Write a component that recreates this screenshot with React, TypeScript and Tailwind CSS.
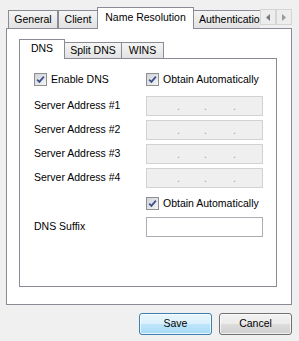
import React from 'react';

const border = 'border-[#898c95]';

function Check() {
  return (
    <span className="w-[13px] h-[13px] border border-[#8e8f8f] bg-[linear-gradient(135deg,#cfd3d9_0%,#f4f4f4_100%)] flex items-center justify-center shrink-0">
      <svg width="9" height="9" viewBox="0 0 9 9">
        <path d="M1.2 4.6 L3.4 6.9 L7.9 1.6" stroke="#3a4f8c" strokeWidth="1.7" fill="none" />
      </svg>
    </span>
  );
}

function IpField() {
  return (
    <div className="w-[117px] h-[20px] border border-[#d2d2d2] bg-[#efefef] flex items-end pb-[4px] text-[#a0a0a0] leading-none">
      <span className="w-[33px] text-right">.</span>
      <span className="w-[27px] text-right">.</span>
      <span className="w-[29px] text-right">.</span>
    </div>
  );
}

function Arrow({ dir }: { dir: 'l' | 'r' }) {
  return (
    <div className="w-[16px] h-[16px] border border-[#d5d5d5] bg-[#ededed] flex items-center justify-center">
      <svg width="4" height="7" viewBox="0 0 4 7">
        {dir === 'l' ? <path d="M4 0 L0 3.5 L4 7 Z" fill="#7a7a7a" /> : <path d="M0 0 L4 3.5 L0 7 Z" fill="#9a9a9a" />}
      </svg>
    </div>
  );
}

export default function App() {
  const rows = ['Server Address #1', 'Server Address #2', 'Server Address #3', 'Server Address #4'];

  return (
    <div className="w-[299px] h-[341px] bg-[#f0f0f0] pt-[7px] pl-[6px] text-[10.5px] text-black font-['Liberation_Sans',Arial,sans-serif] overflow-hidden">
      {/* outer tab strip */}
      <div className="relative z-10 w-[286px] h-[22px] -mb-px flex">
        <div className="flex-1 overflow-hidden flex items-end pl-[2px]">
          <div className={`w-[50px] h-[18px] mb-px shrink-0 border border-b-0 ${border} bg-linear-to-b from-[#f4f4f4] to-[#e2e2e2] flex items-center justify-center`}>General</div>
          <div className={`w-[40px] h-[18px] mb-px shrink-0 border border-b-0 ${border} bg-linear-to-b from-[#f4f4f4] to-[#e2e2e2] flex items-center justify-center`}>Client</div>
          <div className={`w-[97px] h-[22px] -ml-px shrink-0 border border-b-0 ${border} bg-white flex items-center justify-center pb-[2px]`}>Name Resolution</div>
          <div className={`w-[90px] h-[18px] mb-px -ml-px shrink-0 border border-b-0 ${border} bg-linear-to-b from-[#f4f4f4] to-[#e2e2e2] flex items-center pl-[5px] whitespace-nowrap`}>Authentication</div>
        </div>
        <div className="flex self-start mt-[2px]">
          <Arrow dir="l" />
          <Arrow dir="r" />
        </div>
      </div>

      {/* outer panel */}
      <div className={`w-[286px] h-[277px] border ${border} bg-white pt-[10px] pl-[12px]`}>
        {/* inner tab strip */}
        <div className="relative z-10 h-[20px] -mb-px flex items-end">
          <div className={`w-[46px] h-[20px] shrink-0 border border-b-0 ${border} bg-white flex items-center justify-center pb-[1px]`}>DNS</div>
          <div className={`w-[58px] h-[16px] mb-px -ml-px shrink-0 border border-b-0 ${border} bg-linear-to-b from-[#f4f4f4] to-[#e2e2e2] flex items-center justify-center`}>Split DNS</div>
          <div className={`w-[43px] h-[16px] mb-px -ml-px shrink-0 border border-b-0 ${border} bg-linear-to-b from-[#f4f4f4] to-[#e2e2e2] flex items-center justify-center`}>WINS</div>
        </div>

        {/* inner panel */}
        <div className={`w-[258px] h-[229px] border ${border} bg-white pt-[14px] pl-[14px] flex flex-col`}>
          <div className="flex items-center h-[13px]">
            <div className="w-[112px] flex items-center gap-[4px]">
              <Check />
              <span>Enable DNS</span>
            </div>
            <div className="flex items-center gap-[4px]">
              <Check />
              <span>Obtain Automatically</span>
            </div>
          </div>

          <div className="mt-[10px] flex flex-col gap-[4px]">
            {rows.map(r => (
              <div key={r} className="flex items-center h-[20px]">
                <span className="w-[112px]">{r}</span>
                <IpField />
              </div>
            ))}
          </div>

          <div className="mt-[9px] flex items-center h-[13px] pl-[112px] gap-[4px]">
            <Check />
            <span>Obtain Automatically</span>
          </div>

          <div className="mt-[7px] flex items-center h-[20px]">
            <span className="w-[112px]">DNS Suffix</span>
            <div className="w-[117px] h-[20px] border border-[#abadb3] bg-white" />
          </div>
        </div>
      </div>

      {/* buttons */}
      <div className="w-[286px] mt-[8px] flex justify-end gap-[7px]">
        <button className="w-[73px] h-[22px] rounded-[3px] border border-[#3c7fb1] bg-[linear-gradient(#eaf6fd_0%,#d9f0fc_50%,#bee6fd_50%,#a7d9f5_100%)] shadow-[inset_0_0_0_1px_rgba(255,255,255,0.7)]">Save</button>
        <button className="w-[73px] h-[22px] rounded-[3px] border border-[#707070] bg-[linear-gradient(#f2f2f2_0%,#ebebeb_50%,#dddddd_50%,#cfcfcf_100%)] shadow-[inset_0_0_0_1px_rgba(255,255,255,0.7)]">Cancel</button>
      </div>
    </div>
  );
}
